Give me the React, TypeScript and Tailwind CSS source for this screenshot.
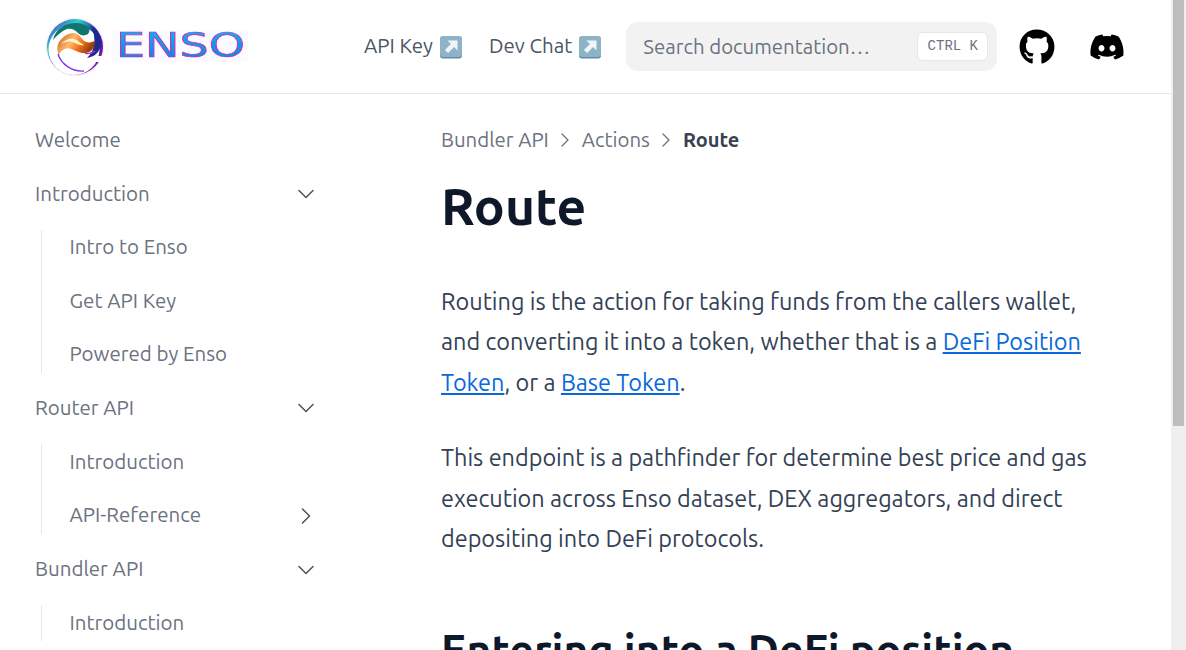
import type { ReactNode } from "react";
import { ChevronDown, ChevronRight } from "lucide-react";
import { FaGithub, FaDiscord } from "react-icons/fa";

const font = "font-['Ubuntu','Noto_Sans',sans-serif]";

function ArrowEmoji() {
  return (
    <svg width="24" height="24" viewBox="0 0 24 24" className="shrink-0">
      <rect x="1" y="1.5" width="22" height="22" rx="3" fill="#5f8ea3" />
      <rect x="1" y="1" width="22" height="21" rx="3" fill="#8db4c6" />
      <path d="M8.5 5.5h10v10l-3.4-3.4-6 6-3.2-3.2 6-6z" fill="#f2f5f7" />
    </svg>
  );
}

function Logo() {
  return (
    <svg width="204" height="64" viewBox="44 15 204 64" className="shrink-0 blur-[0.4px]">
      <defs>
        <linearGradient id="ring" x1="0" y1="0" x2="1" y2="1">
          <stop offset="0" stopColor="#4f1fd1" />
          <stop offset="0.3" stopColor="#2dd4bf" />
          <stop offset="0.55" stopColor="#1e1b9e" />
          <stop offset="1" stopColor="#a21caf" />
        </linearGradient>
        <linearGradient id="swirl" x1="0" y1="0" x2="1" y2="0.4">
          <stop offset="0" stopColor="#c2570c" />
          <stop offset="0.45" stopColor="#fdba74" />
          <stop offset="0.7" stopColor="#f97316" />
          <stop offset="1" stopColor="#92400e" />
        </linearGradient>
        <linearGradient id="word" x1="0" y1="0" x2="0" y2="1">
          <stop offset="0" stopColor="#12b5f5" />
          <stop offset="1" stopColor="#0f7be8" />
        </linearGradient>
      </defs>
      <rect x="112" y="30" width="136" height="32" fill="#fafaff" />
      <circle cx="75" cy="47" r="29.5" fill="#fdeef8" />
      <circle cx="75" cy="47" r="28" fill="url(#ring)" />
      <circle cx="74" cy="49.5" r="25.5" fill="#ffffff" />
      <path d="M91 26c8 5 11 14 9 22-2 6-7 9-13 10 3-3 6-7 7-13 1-7 0-13-3-19z" fill="#1e2a8a" />
      <path d="M62 27c-5 3-8 8-9 13 4-5 9-9 14-11 5-1 8 1 11 4 2 2 5 3 8 2 3-1 4-4 3-7-3-3-8-5-13-5-5 0-10 1-14 4z" fill="#0f766e" />
      <path d="M58 44c3-6 9-11 15-11 5 0 7 3 10 7 3 3 7 3 12 1 0 5-2 9-6 11-4 2-9 1-13-1-4-2-8-4-11-2-3 1-5 3-6 6-2-3-2-7-1-11z" fill="url(#swirl)" />
      <path d="M61 44c4-4 8-6 13-5 4 1 6 4 10 6-5 1-8-2-12-3-4-1-7 0-11 2z" fill="#fef3c7" />
      <path d="M85 53c3 1 7 0 10-2" fill="none" stroke="#c026d3" strokeWidth="1.5" />
      <path d="M58 54c3 10 14 18 26 17" fill="none" stroke="#7c3aed" strokeWidth="1.4" />
      <rect x="96" y="56" width="9" height="6" fill="#ffffff" />
      <text x="116" y="57" fontFamily="'DejaVu Sans',sans-serif" fontSize="33" fontWeight="400" fill="url(#word)" stroke="#d926a9" strokeWidth="0.7" textLength="129" lengthAdjust="spacingAndGlyphs">
        ENSO
      </text>
    </svg>
  );
}

function Item({ label, open, chevron, sub }: { label: string; open?: boolean; chevron?: boolean; sub?: boolean }) {
  return (
    <div className={`flex items-center justify-between pr-[9px] text-[20.5px] text-[#6b7280] ${sub ? "h-9 pl-[27.5px]" : "h-[53.6px] pl-[35px]"}`}>
      <span>{label}</span>
      {chevron && (open ? <ChevronDown size={28} strokeWidth={1.3} className="text-[#4b5563]" /> : <ChevronRight size={28} strokeWidth={1.3} className="text-[#4b5563]" />)}
    </div>
  );
}

function SubList({ children }: { children: ReactNode }) {
  return <div className="my-[9px] ml-[41px] flex flex-col gap-[17.5px] border-l border-[#e5e7eb]">{children}</div>;
}

export default function App() {
  return (
    <div className={`min-h-[987px] bg-white ${font}`}>
      {/* Scrollbar */}
      <div className="fixed top-0 right-0 z-10 h-screen w-[15px] bg-[#efefef] pl-[2px]">
        <div className="h-[426px] w-[11px] bg-[#bdbdbd]" />
      </div>

      {/* Header */}
      <header className="flex h-[94px] items-center border-b border-[#e5e7eb] pl-[44px]">
        <Logo />
        <nav className="ml-[116px] flex items-center gap-[26px] text-[20.5px] text-[#4b5563]">
          <a className="flex items-center gap-[6px]">API Key <ArrowEmoji /></a>
          <a className="flex items-center gap-[6px]">Dev Chat <ArrowEmoji /></a>
        </nav>
        <div className="ml-6 flex h-[49px] w-[371px] items-center justify-between rounded-xl bg-[#f2f2f2] pr-[9px] pl-[17px]">
          <span className="mt-[2px] text-[20.4px] text-[#6b7280]">Search documentation…</span>
          <kbd className="flex h-[29px] w-[71px] items-center justify-center rounded-md border border-[#e5e7eb] bg-white pb-[2px] font-['Liberation_Mono',monospace] text-sm text-[#6b7280]">CTRL K</kbd>
        </div>
        <FaGithub size={36} className="ml-[22px] text-black" />
        <FaDiscord size={36} className="ml-[34px] text-black" />
      </header>

      <div className="flex">
        {/* Sidebar */}
        <aside className="w-[441px] shrink-0 pt-[19.5px]">
          <div className="w-[329px]">
            <Item label="Welcome" />
            <Item label="Introduction" chevron open />
            <SubList>
              <Item sub label="Intro to Enso" />
              <Item sub label="Get API Key" />
              <Item sub label="Powered by Enso" />
            </SubList>
            <Item label="Router API" chevron open />
            <SubList>
              <Item sub label="Introduction" />
              <Item sub label="API-Reference" chevron />
            </SubList>
            <Item label="Bundler API" chevron open />
            <SubList>
              <Item sub label="Introduction" />
            </SubList>
          </div>
        </aside>

        {/* Content */}
        <main className="w-[650px] pt-[31px]">
          <div className="flex items-center gap-[4.5px] text-[20.4px] text-[#6b7280]">
            <span>Bundler API</span>
            <ChevronRight size={24} strokeWidth={1.3} />
            <span>Actions</span>
            <ChevronRight size={24} strokeWidth={1.3} />
            <span className="text-xl font-bold text-[#374151]">Route</span>
          </div>
          <h1 className="mt-[18px] text-[51.6px] leading-[64px] font-bold text-[#0f172a]">Route</h1>
          <p className="mt-[43px] text-[23.45px] leading-[40.6px] text-[#334155]">
            Routing is the action for taking funds from the callers wallet, and converting it into a token, whether that is a{" "}
            <a className="text-[#0969da] underline">DeFi Position Token</a>, or a <a className="text-[#0969da] underline">Base Token</a>.
          </p>
          <p className="mt-[34.5px] text-[23.45px] leading-[40.8px] text-[#334155]">
            This endpoint is a pathfinder for determine best price and gas execution across Enso dataset, DEX aggregators, and direct depositing into DeFi protocols.
          </p>
          <h2 className="mt-[64px] text-[42.8px] leading-[52px] font-bold whitespace-nowrap text-[#0f172a]">Entering into a DeFi position</h2>
        </main>
      </div>
    </div>
  );
}
